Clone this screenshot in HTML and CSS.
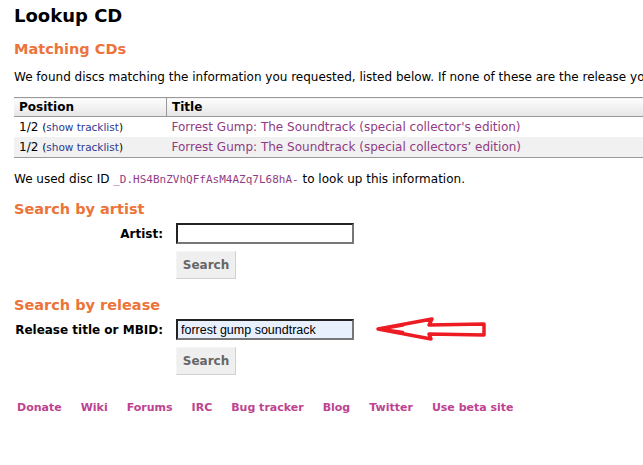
FILE: index.html
```html
<!DOCTYPE html>
<html lang="en">
<head>
    <meta charset="UTF-8">
    <title>Lookup CD</title>
    <link rel="stylesheet" href="styles.css">
</head>
<body>
    <div class="content">
        <h1>Lookup CD</h1>

        <h2 class="first">Matching CDs</h2>
        <p>We found discs matching the information you requested, listed below. If none of these are the release you were looking for, you may search again.</p>

        <table class="tbl">
            <thead>
                <tr>
                    <th class="pos">Position</th>
                    <th>Title</th>
                </tr>
            </thead>
            <tbody>
                <tr>
                    <td>1/2 <span class="small">(<a class="blue" href="#">show tracklist</a>)</span></td>
                    <td><a href="#">Forrest Gump: The Soundtrack (special collector's edition)</a></td>
                </tr>
                <tr class="even">
                    <td>1/2 <span class="small">(<a class="blue" href="#">show tracklist</a>)</span></td>
                    <td><a href="#">Forrest Gump: The Soundtrack (special collectors’ edition)</a></td>
                </tr>
            </tbody>
        </table>

        <p class="discid">We used disc ID <code>_D.HS4BnZVhQFfAsM4AZq7L68hA-</code> to look up this information.</p>

        <h2>Search by artist</h2>
        <form class="search">
            <div class="row">
                <label>Artist:</label>
                <input type="text" class="field">
            </div>
            <div class="row btn-row">
                <span></span>
                <button type="button" class="btn">Search</button>
            </div>
        </form>

        <h2 class="release">Search by release</h2>
        <form class="search">
            <div class="row">
                <label>Release title or MBID:</label>
                <div class="with-arrow">
                    <input type="text" class="field filled" value="forrest gump soundtrack">
                    <svg class="arrow" width="116" height="28" viewBox="0 0 116 28">
                        <path d="M5 14 L59 4 L56 10 L111 9 L111 20 L56 19 L58 24 Z" fill="none" stroke="#ed1c24" stroke-width="3.5" stroke-linejoin="round"/>
                        <path d="M9 14 L30 10.5 M9 14 L30 17" fill="none" stroke="#ed1c24" stroke-width="2.5" stroke-linecap="round"/>
                    </svg>
                </div>
            </div>
            <div class="row btn-row">
                <span></span>
                <button type="button" class="btn">Search</button>
            </div>
        </form>

        <div class="footer">
            <a href="#">Donate</a>
            <a href="#">Wiki</a>
            <a href="#">Forums</a>
            <a href="#">IRC</a>
            <a href="#">Bug tracker</a>
            <a href="#">Blog</a>
            <a href="#">Twitter</a>
            <a href="#">Use beta site</a>
        </div>
    </div>
</body>
</html>
```

FILE: styles.css
```css
:root {
    --orange: #eb743b;
    --link: #8f3c84;
    --blue: #2d3a8f;
    --border: #999;
}

html {
    overflow: hidden;
}

body {
    margin: 0;
    font-family: "DejaVu Sans", Verdana, sans-serif;
    font-size: 12px;
    color: #000;
    background: #fff;
}

.content {
    padding: 0 14px;
    width: 1000px;
}

h1 {
    font-size: 18px;
    margin: 6px 0 0;
    line-height: 20px;
}

h2 {
    font-size: 14.5px;
    color: var(--orange);
    margin: 12px 0 0;
    line-height: 18px;
}

h2.first {
    margin-top: 14px;
}

h2.release {
    margin-top: 17px;
}

p {
    margin: 11px 0 0;
    line-height: 16px;
    white-space: nowrap;
}

a {
    color: var(--link);
    text-decoration: none;
}

.tbl {
    margin-top: 12px;
    width: 900px;
    border-collapse: collapse;
    border-top: 1px solid var(--border);
    border-bottom: 1px solid var(--border);
}

.tbl th {
    text-align: left;
    height: 18px;
    padding: 0 5px;
    background: linear-gradient(#fdfdfd, #e6e6e6);
    border-bottom: 1px solid var(--border);
    line-height: 18px;
}

.tbl th.pos {
    width: 142px;
    border-right: 1px solid var(--border);
}

.tbl td {
    height: 20px;
    padding: 0 5px;
    line-height: 20px;
}

.tbl tr.even td {
    background: #f1f1f1;
}

.small {
    font-size: 10.5px;
}

a.blue {
    color: var(--blue);
}

.discid {
    margin-top: 13px;
}

code {
    font-family: "DejaVu Sans Mono", monospace;
    font-size: 11px;
    color: var(--link);
}

.search {
    margin: 0;
}

.row {
    display: grid;
    grid-template-columns: 149px 1fr;
    column-gap: 13px;
    align-items: center;
    margin-top: 5px;
}

.btn-row {
    margin-top: 7px;
}

.row label {
    text-align: right;
    font-weight: bold;
    font-size: 12px;
    white-space: nowrap;
}

.with-arrow {
    display: flex;
    align-items: center;
    gap: 19px;
}

.field {
    box-sizing: border-box;
    width: 178px;
    height: 21px;
    margin: 0;
    padding: 0 3px;
    border: 2px solid;
    border-color: #222 #777 #777 #222;
    font-family: "Liberation Sans", Arial, sans-serif;
    font-size: 12.5px;
    background: #fff;
    outline: none;
}

.field.filled {
    background: #e8f0fe;
}

.btn {
    justify-self: start;
    width: 60px;
    height: 28px;
    margin: 0;
    padding: 0;
    background: #efefef;
    border: 1px solid;
    border-color: #f4f4f4 #d0d0d0 #d0d0d0 #f4f4f4;
    font-family: "DejaVu Sans", Verdana, sans-serif;
    font-weight: bold;
    font-size: 12px;
    color: #666;
}

.arrow {
    display: block;
    margin: -4px 0 -3px;
}

.footer {
    margin-top: 26px;
    padding-left: 3px;
    display: flex;
    gap: 19px;
    font-size: 11px;
    font-weight: bold;
}

.footer a {
    color: #bd4390;
}
```
